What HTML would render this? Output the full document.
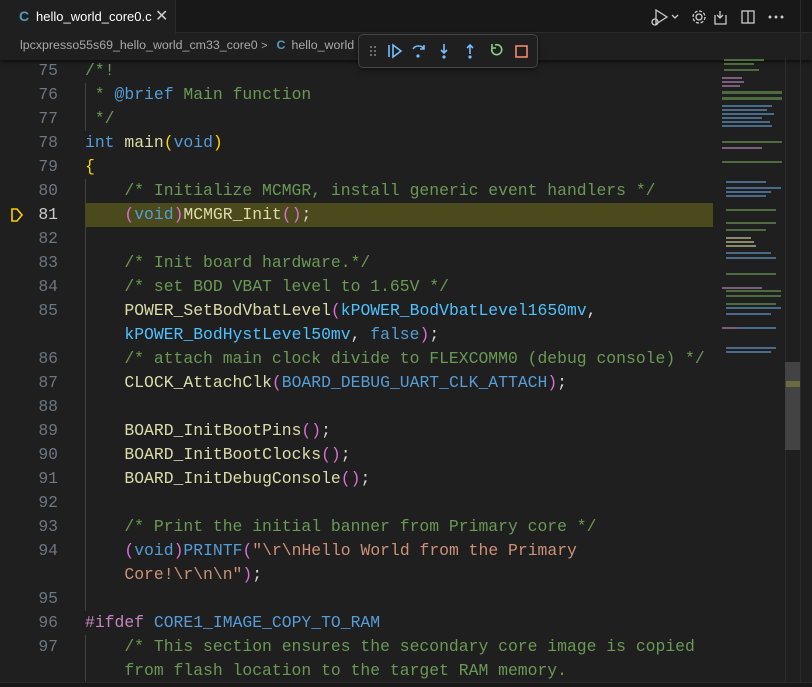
<!DOCTYPE html>
<html><head><style>
*{margin:0;padding:0;box-sizing:border-box}
body{width:812px;height:687px;background:#1f1f1f;overflow:hidden;position:relative;font-family:"Liberation Sans",sans-serif}
.tabbar{position:absolute;left:0;top:0;width:812px;height:33px;background:#181818;border-bottom:1px solid #2b2b2b}
.tab{position:absolute;left:0;top:0;width:176px;height:34px;background:#1f1f1f;border-right:1px solid #2b2b2b}
.tab .c{position:absolute;left:19px;top:8px;color:#519aba;font-weight:bold;font-size:14px}
.tab .n{position:absolute;left:36px;top:9px;color:#fff;font-size:13px}
.tab .x{position:absolute;left:155px;top:6px;color:#ccc;font-size:16px}
.bc{position:absolute;left:20px;top:38px;color:#a9a9a9;font-size:12.4px;white-space:nowrap}
.bc .c{color:#519aba;font-weight:bold;margin:0 6px 0 9px}
.code{position:absolute;left:0;top:59px;width:713px;font-family:"Liberation Mono",monospace;font-size:16.4px}
.r{position:relative;height:24px;line-height:24px;white-space:pre;color:#d4d4d4}
.ln{position:absolute;left:0;width:58px;text-align:right;color:#6e7681}
.tx{position:absolute;left:85px}
.cm{color:#6a9955}.kw{color:#569cd6}.fn{color:#dcdcaa}.cn{color:#4fc1ff}.p{color:#da70d6}.y{color:#ffd700}.s{color:#ce9178}.pp{color:#c586c0}.v{color:#9cdcfe}
.hl{position:absolute;left:85px;top:203px;width:628px;height:24px;background:#4b4a1c}
.g{position:absolute;width:1px;background:#404040}
.dbg{position:absolute;left:358px;top:34px;width:180px;height:34px;background:#1f1f1f;border:1px solid #454545;border-radius:5px;box-shadow:0 2px 6px #0008}
.mm{position:absolute;left:720px;top:57px;width:64px;height:320px}
.sb{position:absolute;left:785px;top:362px;width:15px;height:88px;background:#434343}
</style></head><body>
<div class="tabbar"><div class="tab"><span class="c">C</span><span class="n">hello_world_core0.c</span><span class="x">✕</span></div>
<svg style="position:absolute;left:648px;top:6px" width="160" height="22" fill="none" stroke="#ccc" stroke-width="1.3">
<path d="M8 4 L19 11 L8 18 Z"/><circle cx="7" cy="16" r="3" stroke="#ccc"/>
<path d="M24 9 l3 3 l3 -3"/>
<circle cx="51" cy="11" r="3"/><circle cx="51" cy="11" r="6" stroke-dasharray="3 1.7"/>
<path d="M72 5 v7 m-3 -3 l3 3 l3 -3 M67 9 v9 h11 v-9"/>
<rect x="94" y="5" width="12" height="12"/><path d="M100 5 v12"/>
<circle cx="122" cy="11" r="0.8" fill="#ccc"/><circle cx="128" cy="11" r="0.8" fill="#ccc"/><circle cx="134" cy="11" r="0.8" fill="#ccc"/>
</svg></div>
<div class="bc">lpcxpresso55s69_hello_world_cm33_core0 <span style="font-size:11px">&gt;</span><span class="c">C</span>hello_world</div>
<div style="position:absolute;left:0;top:57px;width:812px;height:3px;box-shadow:0 2px 3px #000a"></div>
<div class="hl"></div>
<div class="g" style="left:85px;top:83px;height:48px"></div>
<div class="g" style="left:85px;top:179px;height:24px"></div>
<div class="g" style="left:85px;top:227px;height:384px"></div>
<div class="g" style="left:85px;top:635px;height:48px"></div>
<svg style="position:absolute;left:10px;top:207px" width="14" height="16"><path d="M2 2 h5 l5 6 l-5 6 h-5 z" fill="none" stroke="#ffcc00" stroke-width="1.6"/></svg>
<div class="code">
<div class="r"><span class="ln">75</span><span class="tx cm">/*!</span></div>
<div class="r"><span class="ln">76</span><span class="tx"><span class="cm"> * </span><span class="kw">@brief</span><span class="cm"> Main function</span></span></div>
<div class="r"><span class="ln">77</span><span class="tx cm"> */</span></div>
<div class="r"><span class="ln">78</span><span class="tx"><span class="kw">int</span> <span class="fn">main</span><span class="y">(</span><span class="kw">void</span><span class="y">)</span></span></div>
<div class="r"><span class="ln">79</span><span class="tx y">{</span></div>
<div class="r"><span class="ln">80</span><span class="tx cm">    /* Initialize MCMGR, install generic event handlers */</span></div>
<div class="r"><span class="ln" style="color:#ccc">81</span><span class="tx">    <span class="p">(</span><span class="kw">void</span><span class="p">)</span><span class="fn">MCMGR_Init</span><span class="p">()</span>;</span></div>
<div class="r"><span class="ln">82</span></div>
<div class="r"><span class="ln">83</span><span class="tx cm">    /* Init board hardware.*/</span></div>
<div class="r"><span class="ln">84</span><span class="tx cm">    /* set BOD VBAT level to 1.65V */</span></div>
<div class="r"><span class="ln">85</span><span class="tx">    <span class="fn">POWER_SetBodVbatLevel</span><span class="p">(</span><span class="cn">kPOWER_BodVbatLevel1650mv</span>,</span></div>
<div class="r"><span class="tx">    <span class="cn">kPOWER_BodHystLevel50mv</span>, <span class="kw">false</span><span class="p">)</span>;</span></div>
<div class="r"><span class="ln">86</span><span class="tx cm">    /* attach main clock divide to FLEXCOMM0 (debug console) */</span></div>
<div class="r"><span class="ln">87</span><span class="tx">    <span class="fn">CLOCK_AttachClk</span><span class="p">(</span><span class="kw">BOARD_DEBUG_UART_CLK_ATTACH</span><span class="p">)</span>;</span></div>
<div class="r"><span class="ln">88</span></div>
<div class="r"><span class="ln">89</span><span class="tx">    <span class="fn">BOARD_InitBootPins</span><span class="p">()</span>;</span></div>
<div class="r"><span class="ln">90</span><span class="tx">    <span class="fn">BOARD_InitBootClocks</span><span class="p">()</span>;</span></div>
<div class="r"><span class="ln">91</span><span class="tx">    <span class="fn">BOARD_InitDebugConsole</span><span class="p">()</span>;</span></div>
<div class="r"><span class="ln">92</span></div>
<div class="r"><span class="ln">93</span><span class="tx cm">    /* Print the initial banner from Primary core */</span></div>
<div class="r"><span class="ln">94</span><span class="tx">    <span class="p">(</span><span class="kw">void</span><span class="p">)</span><span class="kw">PRINTF</span><span class="p">(</span><span class="s">"\r\nHello World from the Primary</span></span></div>
<div class="r"><span class="tx">    <span class="s">Core!\r\n\n"</span><span class="p">)</span>;</span></div>
<div class="r"><span class="ln">95</span></div>
<div class="r"><span class="ln">96</span><span class="tx"><span class="pp">#ifdef</span> <span class="kw">CORE1_IMAGE_COPY_TO_RAM</span></span></div>
<div class="r"><span class="ln">97</span><span class="tx cm">    /* This section ensures the secondary core image is copied</span></div>
<div class="r"><span class="tx cm">    from flash location to the target RAM memory.</span></div>
</div>
<svg class="mm" viewBox="0 0 64 320">
<g fill="#4d6b3e"><rect x="4" y="2" width="40" height="2"/><rect x="4" y="6" width="30" height="2"/><rect x="4" y="12" width="35" height="2"/><rect x="2" y="34" width="60" height="3"/><rect x="2" y="40" width="60" height="3"/><rect x="2" y="84" width="60" height="2"/><rect x="2" y="104" width="60" height="2"/><rect x="6" y="152" width="50" height="2"/><rect x="6" y="165" width="50" height="2"/><rect x="6" y="172" width="40" height="2"/><rect x="6" y="216" width="50" height="2"/><rect x="6" y="233" width="55" height="2"/><rect x="6" y="238" width="55" height="2"/><rect x="6" y="246" width="50" height="2"/></g>
<g fill="#4a6a8a"><rect x="2" y="48" width="50" height="2"/><rect x="2" y="52" width="45" height="2"/><rect x="2" y="56" width="52" height="2"/><rect x="2" y="60" width="40" height="2"/><rect x="2" y="64" width="48" height="2"/><rect x="2" y="68" width="50" height="2"/><rect x="6" y="124" width="40" height="2"/><rect x="6" y="130" width="55" height="2"/><rect x="6" y="134" width="45" height="2"/><rect x="6" y="138" width="40" height="2"/><rect x="6" y="195" width="45" height="2"/><rect x="6" y="200" width="50" height="2"/><rect x="6" y="250" width="55" height="2"/><rect x="6" y="256" width="45" height="2"/><rect x="6" y="270" width="50" height="2"/><rect x="6" y="290" width="50" height="2"/><rect x="6" y="294" width="45" height="2"/></g>
<g fill="#7a5f7a"><rect x="2" y="20" width="20" height="2"/><rect x="2" y="24" width="22" height="2"/><rect x="2" y="28" width="18" height="2"/><rect x="2" y="90" width="40" height="2"/><rect x="2" y="230" width="40" height="2"/><rect x="2" y="270" width="15" height="2"/></g>
<g fill="#8a8a6a"><rect x="6" y="180" width="25" height="2"/><rect x="6" y="184" width="28" height="2"/><rect x="6" y="188" width="30" height="2"/></g>
</svg>
<div style="position:absolute;left:785px;top:57px;width:1px;height:630px;background:#2b2b2b"></div>
<div style="position:absolute;left:800px;top:0;width:1px;height:687px;background:#2b2b2b"></div>
<div class="sb"></div>
<div style="position:absolute;left:786px;top:381px;width:14px;height:6px;background:#6b6a40"></div>
<div style="position:absolute;left:0;top:682px;width:812px;height:5px;background:#181818;border-top:1px solid #2b2b2b"></div>
<div class="dbg">
<svg width="180" height="34" fill="none" stroke-width="1.6">
<g fill="#888" stroke="none"><circle cx="12" cy="12" r="1"/><circle cx="16" cy="12" r="1"/><circle cx="12" cy="16" r="1"/><circle cx="16" cy="16" r="1"/><circle cx="12" cy="20" r="1"/><circle cx="16" cy="20" r="1"/></g>
<g stroke="#75beff"><path d="M30 10 v12 M34 10 l8 6 l-8 6 z"/>
<path d="M54 14 a6 5 0 0 1 11 0 m0 -4 v4 h-4"/><circle cx="59" cy="21" r="1.6" fill="#75beff" stroke="none"/>
<path d="M85 9 v9 m-3 -3 l3 3 l3 -3"/><circle cx="85" cy="22" r="1.6" fill="#75beff" stroke="none"/>
<path d="M111 19 v-9 m-3 3 l3 -3 l3 3"/><circle cx="111" cy="22" r="1.6" fill="#75beff" stroke="none"/></g>
<path d="M133 13 a5 5 0 1 0 3 -3 m-3 -1 v4 h4" stroke="#89d185"/>
<rect x="157" y="11" width="11" height="11" stroke="#f48771"/>
</svg></div>
</body></html>
